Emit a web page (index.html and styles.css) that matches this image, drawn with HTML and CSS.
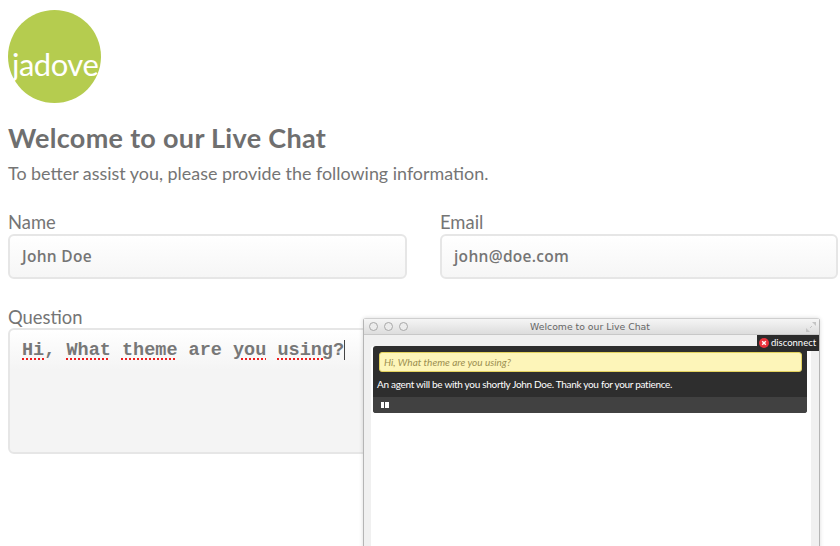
FILE: index.html
```html
<!DOCTYPE html>
<html lang="en">
<head>
  <meta charset="UTF-8">
  <meta name="viewport" content="width=device-width, initial-scale=1.0">
  <title>Live Chat</title>
  <link rel="stylesheet" href="styles.css">
</head>
<body>
  <main class="page">
    <div class="logo"><span class="logo-text">jadove</span></div>
    <h1>Welcome to our Live Chat</h1>
    <p class="intro">To better assist you, please provide the following information.</p>
    <form class="fields">
      <div class="field">
        <label>Name</label>
        <div class="input">John Doe</div>
      </div>
      <div class="field">
        <label>Email</label>
        <div class="input">john@doe.com</div>
      </div>
      <div class="field field-wide">
        <label>Question</label>
        <div class="textarea"><span class="typo">Hi</span>, <span class="typo">What</span> <span class="typo">theme</span> are <span class="typo">you</span> <span class="typo">using</span>?<span class="caret"></span></div>
      </div>
    </form>
  </main>

  <section class="chat">
    <div class="titlebar">
      <div class="lights"><i></i><i></i><i></i></div>
      <div class="title">Welcome to our Live Chat</div>
      <svg class="resize" width="12" height="12" viewBox="0 0 12 12">
        <path d="M7 1h4v4zM1 7v4h4z" fill="#c4c4c4"/>
        <path d="M5 7l2-2" stroke="#c4c4c4" stroke-width="1"/>
      </svg>
    </div>
    <div class="chat-body">
      <div class="disconnect">
        <svg width="10" height="10" viewBox="0 0 10 10">
          <circle cx="5" cy="5" r="5" fill="#e8323c"/>
          <path d="M3.2 3.2l3.6 3.6M6.8 3.2l-3.6 3.6" stroke="#fff" stroke-width="1.4"/>
        </svg>
        disconnect
      </div>
      <div class="chat-inner">
        <div class="panel">
          <div class="bubble">Hi, What theme are you using?</div>
          <div class="notice">An agent will be with you shortly John Doe. Thank you for your patience.</div>
          <div class="controls"><i></i><i></i></div>
        </div>
      </div>
    </div>
  </section>
</body>
</html>
```

FILE: styles.css
```css
* {
  padding: 0;
  margin: 0;
  box-sizing: border-box;
}
html, body {
  height: 546px;
  overflow: hidden;
}
body {
  position: relative;
  background-color: #fff;
  color: #757575;
  font-family: "Lato", "Liberation Sans", sans-serif;
}
.page {
  padding: 10px 2px 0 8px;
}
.logo {
  width: 93px;
  height: 93px;
  border-radius: 50%;
  background-color: #b5cc4f;
  display: flex;
  align-items: center;
  padding: 14px 0 0 4px;
  white-space: nowrap;
}
.logo-text {
  color: #fff;
  font-family: "Lato", sans-serif;
  font-size: 31px;
  font-weight: 400;
  letter-spacing: -0.5px;
}
h1 {
  margin-top: 19px;
  font-size: 27px;
  line-height: 32px;
  font-weight: 700;
  letter-spacing: 0.3px;
  color: #6f6f6f;
}
.intro {
  margin-top: 7px;
  font-size: 17.9px;
  line-height: 24px;
}
.fields {
  margin-top: 27px;
  display: grid;
  grid-template-columns: 399px 398px;
  column-gap: 33px;
  row-gap: 28px;
}
.field label {
  display: block;
  font-size: 18.4px;
  line-height: 20px;
  height: 22px;
}
.input,
.textarea {
  border: 2px solid #e6e6e6;
  border-radius: 6px;
  background: linear-gradient(#ffffff, #f6f6f6);
}
.input {
  height: 45px;
  padding-left: 12px;
  font-family: "Open Sans", sans-serif;
  font-size: 15.5px;
  font-weight: 600;
  line-height: 41px;
  letter-spacing: 0.3px;
}
.field-wide {
  grid-column: 1 / 3;
}
.textarea {
  width: 600px;
  height: 126px;
  margin-top: -1px;
  padding: 10px 12px;
  background: linear-gradient(#ffffff, #f4f4f4 40px);
  font-family: "Liberation Mono", monospace;
  font-size: 18.5px;
  font-weight: 700;
  line-height: 21px;
  color: #777;
  white-space: pre;
}
.typo {
  text-decoration: underline dotted #ee1c1c 2px;
  text-underline-offset: 3px;
}
.caret {
  display: inline-block;
  width: 1px;
  height: 20px;
  background-color: #444;
  vertical-align: -5px;
}

/* floating chat window */
.chat {
  position: absolute;
  left: 363px;
  top: 318px;
  width: 457px;
  height: 240px;
  border: 1px solid #cfcfcf;
  border-left-color: #b5b5b5;
  border-right-color: #b5b5b5;
  box-shadow: 0 0 4px rgba(0, 0, 0, 0.15);
  border-radius: 3px 3px 0 0;
  display: flex;
  flex-direction: column;
  background-color: #f0f0f0;
}
.titlebar {
  height: 16px;
  flex: none;
  background: linear-gradient(#f5f5f5, #dddddd);
  border-bottom: 1px solid #c8c8c8;
  display: flex;
  align-items: center;
  position: relative;
  padding-left: 5px;
}
.lights {
  display: flex;
  gap: 6px;
}
.lights i {
  display: block;
  width: 9px;
  height: 9px;
  border: 1px solid #a8a8a8;
  border-radius: 50%;
  background-color: #ececec;
}
.title {
  flex: 1;
  text-align: center;
  font-family: "DejaVu Sans", sans-serif;
  font-size: 9.3px;
  color: #666;
  padding-right: 47px;
}
.resize {
  position: absolute;
  right: 2px;
  top: 2px;
}
.chat-body {
  flex: 1;
  position: relative;
  padding: 11px 8px 0 7px;
}
.chat-inner {
  height: 100%;
  background-color: #fff;
  border-radius: 3px 3px 0 0;
  padding: 0 4px 0 2px;
}
.disconnect {
  position: absolute;
  right: 0;
  top: 0;
  width: 62px;
  height: 16px;
  background-color: #2b2b2b;
  color: #fff;
  font-size: 9.5px;
  line-height: 16px;
  display: flex;
  align-items: center;
  gap: 2px;
  padding-left: 2px;
  white-space: nowrap;
  z-index: 1;
}
.disconnect svg {
  flex: none;
}
.panel {
  height: 67px;
  background-color: #2e2e2e;
  border-radius: 3px;
  display: flex;
  flex-direction: column;
  padding-top: 6px;
}
.bubble {
  height: 20px;
  margin: 0 5px 0 6px;
  flex: none;
  background-color: #fdf5b9;
  border: 1px solid #e3d25e;
  border-radius: 3px;
  color: #9c8f50;
  font-size: 10px;
  font-style: italic;
  line-height: 18px;
  padding-left: 4px;
}
.notice {
  flex: 1;
  color: #fff;
  font-size: 10px;
  letter-spacing: -0.3px;
  line-height: 25px;
  padding-left: 4px;
}
.controls {
  height: 16px;
  flex: none;
  background-color: #414141;
  border-radius: 0 0 3px 3px;
  display: flex;
  align-items: center;
  gap: 1px;
  padding-left: 8px;
}
.controls i {
  display: block;
  width: 3px;
  height: 6px;
  background-color: #fff;
}
.controls i + i {
  width: 4px;
}
```
